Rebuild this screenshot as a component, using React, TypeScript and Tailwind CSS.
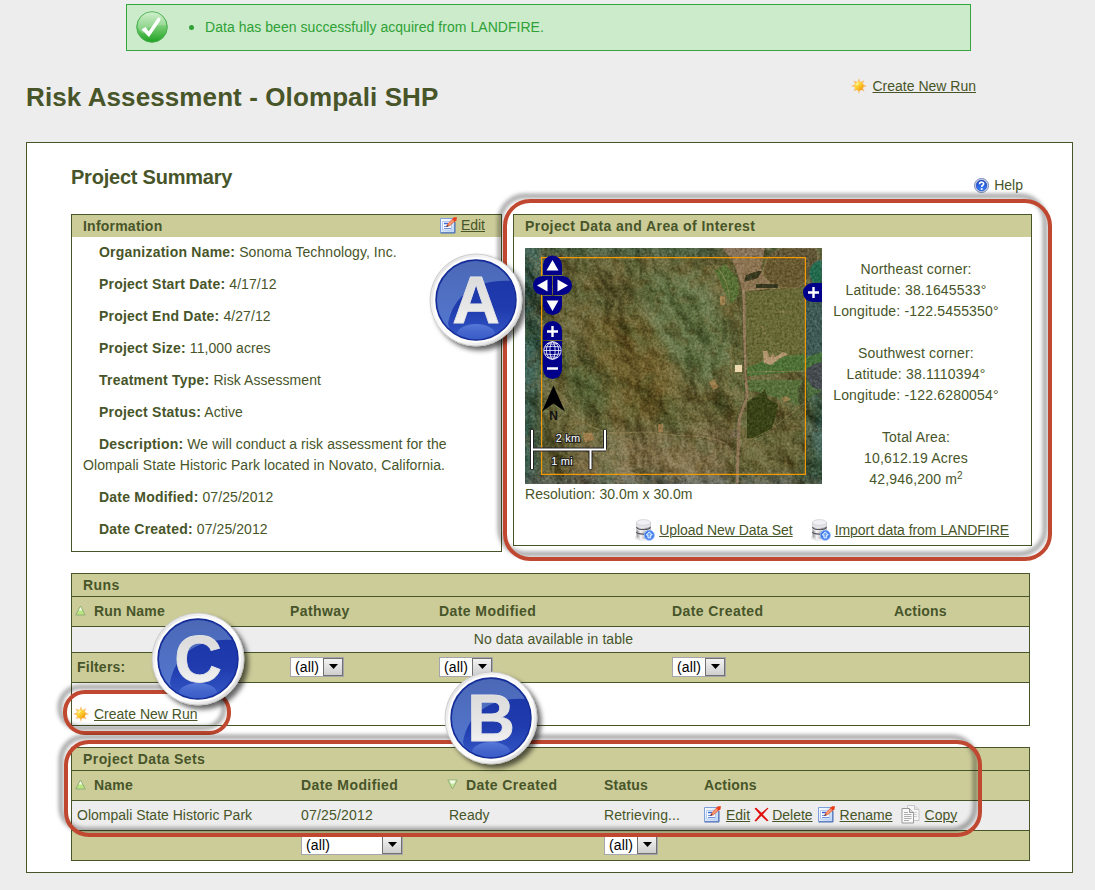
import type { ReactNode } from "react";

function EditIcon() {
  return (
    <svg width="17" height="17" viewBox="0 0 17 17" className="block shrink-0">
      <defs>
        <linearGradient id="editPaper" x1="0" y1="0" x2="1" y2="1">
          <stop offset="0" stopColor="#ffffff" />
          <stop offset="1" stopColor="#b9d3f7" />
        </linearGradient>
      </defs>
      <path d="M.5 1.500h14v14H.5z" fill="url(#editPaper)" stroke="#7d9fdc" />
      <path d="M.5 16h14.500v-11" fill="none" stroke="#4a6bb0" />
      <path d="M2.500 4.500h9v8.500h-9z" fill="#f8fbff" stroke="#b4caee" />
      <path d="M4 6.500h4" stroke="#3f66d8" strokeWidth="1.500" />
      <path d="M4 9.500h3M4 11.500h7" stroke="#6d90dc" />
      <path d="M6.500 9.500l1.300-2.700L13 1.700l2.200 2-5.500 5z" fill="#f47a50" stroke="#d2492a" strokeWidth=".5" />
      <path d="M12 2.200l2-2h3l-.6 3-1.700 1.500z" fill="#ea3c18" />
      <path d="M6.300 10l.8-2 1.500 1.300z" fill="#33335c" />
      <path d="M9 7.500l4.500-4.300" stroke="#ffd0b8" strokeWidth=".8" />
    </svg>
  );
}

function SunIcon() {
  return (
    <svg width="16" height="16" viewBox="0 0 16 16" className="block shrink-0">
      <defs>
        <linearGradient id="sunFill" x1="0" y1="0" x2="1" y2="1">
          <stop offset="0" stopColor="#fff06a" />
          <stop offset=".5" stopColor="#fdcb2b" />
          <stop offset="1" stopColor="#f08a08" />
        </linearGradient>
      </defs>
      <path
        d="M8 0l1.200 4.100L13.300 2.200 11.700 6 16 8l-4.300 1.400 1.900 4.200-4.400-1.800L8 16l-1.500-4.200L2.600 13.300 4.200 9.500 0 8l4.200-1.700L2.400 2.400l4.200 1.700z"
        fill="#f8b45c"
        opacity=".85"
      />
      <circle cx="8" cy="8" r="4.500" fill="url(#sunFill)" />
      <path d="M5.500 7l2-2" stroke="#fff6b4" strokeWidth="1.400" />
    </svg>
  );
}

function HelpIcon() {
  return (
    <svg width="15" height="15" viewBox="0 0 15 15" className="block shrink-0">
      <defs>
        <linearGradient id="helpFill" x1="0" y1="0" x2="0" y2="1">
          <stop offset="0" stopColor="#1740c0" />
          <stop offset="1" stopColor="#3f86ff" />
        </linearGradient>
      </defs>
      <circle cx="7.500" cy="7.500" r="7" fill="#e4ebf9" stroke="#7385b4" />
      <circle cx="7.500" cy="7.500" r="5.400" fill="url(#helpFill)" stroke="#1b3da4" strokeWidth=".6" />
      <path d="M5.500 6.200c0-2.900 4.200-2.600 4.200-.4 0 1.500-2 1.400-2 3.100" fill="none" stroke="#fff" strokeWidth="1.600" />
      <circle cx="7.700" cy="10.900" r="1" fill="#fff" />
    </svg>
  );
}

function DatabaseIcon() {
  return (
    <svg width="20" height="22" viewBox="0 0 20 22" className="block shrink-0">
      <defs>
        <linearGradient id="dbFill" x1="0" x2="1" y1="0" y2="0">
          <stop offset="0" stopColor="#8d8d93" />
          <stop offset=".3" stopColor="#f7f7f9" />
          <stop offset="1" stopColor="#75757c" />
        </linearGradient>
      </defs>
      <path d="M0 16c0 6 18 6 18 0v3c0 3.500-18 3.500-18 0z" fill="#cfcfd2" opacity=".6" />
      <path d="M1.500 3.500v14c0 3.400 14 3.400 14 0v-14z" fill="url(#dbFill)" />
      <path d="M1.500 8.300c0 3 14 3 14 0M1.500 12.800c0 3 14 3 14 0" fill="none" stroke="#55555c" strokeWidth="1.200" />
      <path d="M1.500 9.500c0 3 14 3 14 0" fill="none" stroke="#fff" strokeWidth=".7" />
      <path d="M1.500 3.500v3.300c0 3 14 3 14 0V3.500z" fill="#e3e3e8" />
      <ellipse cx="8.500" cy="3.500" rx="7" ry="2.900" fill="#f1f1f4" stroke="#c4c4ca" strokeWidth=".6" />
      <circle cx="14.300" cy="16.300" r="5" fill="#3f7cec" stroke="#8fb6fb" strokeWidth=".9" />
      <path d="M14.300 12.800l3 3.200h-1.600v2.900h-2.800V16h-1.600z" fill="#6fa4ff" stroke="#fff" strokeWidth=".9" />
    </svg>
  );
}

function CopyIcon() {
  return (
    <svg width="19" height="19" viewBox="0 0 19 19" className="block shrink-0">
      <path d="M6.500.5h7l4.500 4v11H6.500z" fill="#f6f6f6" stroke="#c6c6c6" />
      <path d="M13.500.5v4H18" fill="#e2e2e2" stroke="#c6c6c6" />
      <path d="M12 7.500h4M12 9.500h4M12 11.500h4" stroke="#cfcfcf" />
      <path d="M1 3.500h7.500l4 4v10.500H1z" fill="#f9f9f9" stroke="#999" />
      <path d="M8.500 3.500v4h4" fill="#dadada" stroke="#999" />
      <path d="M3 7.500h4M3 9.500h7.500M3 11.500h7.500M3 13.500h7.500M3 15.500h5" stroke="#adadad" />
    </svg>
  );
}

function DeleteIcon() {
  return (
    <svg width="15" height="15" viewBox="0 0 15 15" className="block shrink-0">
      <path d="M.5 1.500L2.200.8 7.500 5.800 13.500.7l1 .5-5.700 6.200 5.700 6.100-1.500.8-5.700-5.200L2 14.500.5 13.800l5.300-6.300z" fill="#e20d0d" />
    </svg>
  );
}

function SuccessIcon() {
  return (
    <svg width="32" height="34" viewBox="0 0 32 34" className="block shrink-0">
      <defs>
        <linearGradient id="okFill" x1="0" y1="0" x2="0" y2="1">
          <stop offset="0" stopColor="#c4ecc0" />
          <stop offset=".5" stopColor="#74cb70" />
          <stop offset="1" stopColor="#1fa222" />
        </linearGradient>
      </defs>
      <circle cx="16" cy="16" r="15.300" fill="url(#okFill)" stroke="#46ad4a" />
      <path d="M2 15a14 14 0 0 1 28-.5c-9-1-18 0-23 8C4 20 2 18 2 15z" fill="#fff" opacity=".22" />
      <path d="M5.500 18.500l4-2.500 3.200 4.300L22 6.500l2.500.5-.5 3L13 26z" fill="#fff" />
    </svg>
  );
}

function SortIcon({ down = false }: { down?: boolean }) {
  return (
    <svg width="11" height="11" viewBox="0 0 11 11" className="block">
      {down ? (
        <>
          <path d="M.8 1h9.400L5.500 10z" fill="#c3e79a" stroke="#94b07c" strokeLinejoin="round" />
          <path d="M2.500 1.500h6l-1.500 3H4z" fill="#f8fff0" />
        </>
      ) : (
        <>
          <path d="M5.500 1l4.700 9H.8z" fill="#b9e67f" stroke="#8fac78" strokeLinejoin="round" />
          <path d="M5.500 2l1.700 3.500H3.800z" fill="#f6ffea" />
        </>
      )}
    </svg>
  );
}

function Filter({ wide = false }: { wide?: boolean }) {
  return (
    <div
      className={
        (wide ? "w-[102px]" : "w-[54px]") +
        " mb-0.5 flex h-5 items-center justify-between border border-[#a5a5ab] bg-white pl-1 text-sm text-black"
      }
    >
      <span className="tracking-[0.15px]">(all)</span>
      <span className="flex h-[18px] w-5 items-center justify-center border border-[#707070] bg-linear-to-b from-[#f3f3f3] to-[#cfcfcf]">
        <svg width="9" height="5" viewBox="0 0 9 5">
          <path d="M0 0h9L4.500 5z" fill="#000" />
        </svg>
      </span>
    </div>
  );
}

function Bold({ children, wide = false }: { children: ReactNode; wide?: boolean }) {
  return <b className={wide ? "tracking-[0.42px]" : "tracking-[0.22px]"}>{children}</b>;
}

function Link({ children }: { children: ReactNode }) {
  return (
    <a href="#" className="underline decoration-1 underline-offset-1">
      {children}
    </a>
  );
}

function Terrain() {
  return (
    <g className="isolate">
      <rect width="297" height="236" fill="#62643f" />
      <g filter="url(#soften)">
        <path d="M-10-10h28l-6 60 8 50-10 60 4 50-4 40h-30z" fill="#31594e" />
        <path d="M20-8h170v14H20z" fill="#466347" />
        <path d="M120 20l60 10 34 80-34 30-54-50z" fill="#5c734e" />
        <path d="M60 70l60 0 30 50 0 50-60 0z" fill="#675e30" />
        <path d="M55 192l150-15 5 60H40z" fill="#7b7354" />
        <path d="M0 230h300v20H0z" fill="#636b64" />
        <path d="M285 110h30v130h-34l4-50z" fill="#3d6057" />
        <path d="M35 115l36 0 10 30-26 25z" fill="#53683f" />
      </g>
      <rect width="297" height="236" filter="url(#patches)" opacity=".45" />
      <rect width="297" height="236" filter="url(#scrub)" opacity=".25" />
      <g className="mix-blend-soft-light">
        <rect width="297" height="236" filter="url(#relief)" opacity=".75" />
      </g>
      <path d="M221 44l76-6v76l-72 14-4-40z" fill="#5f673b" />
      <path d="M218 132h78v11l-22 14-45-14h-11z" fill="#4e6e40" />
      <path d="M246 110l51-6v18l-75 6 0-8z" fill="#44703b" />
      <path d="M190 22l10-6 12 14 2 16-8 10-8-16z" fill="#4e7039" />
      <path d="M198 0h42l-4 20 12 20-30 4-8-26z" fill="#877359" />
      <path d="M238 23C240 8 252 0 258 0h32c8 12-4 32-18 40l-14 0c-12-4-20-9-20-17z" fill="#605636" stroke="#80754f" />
      <path d="M284 26c0-8 6-14 13-14v24h-9z" fill="#236b4e" stroke="#4e5a4c" />
      <path d="M281 44l16-6v66l-16 5z" fill="#3f5a54" />
      <path d="M281 122c5-5 10-7 16-8v27c-9 2-15-6-16-19z" fill="#454b4e" />
      <path d="M274 140l7-14 2 38-10-10z" fill="#3c4a30" />
      <path d="M222 154l14-9 4-4 3 10 10 5-2 12-5 14-14 8-10 0z" fill="#2c3d18" />
      <path d="M237 23l-4 7-14 4 2-7 12-4zM231 36h22v4h-22z" fill="#2a3120" />
      <path
        d="M183 12c10 8 18 12 22 40M220 42l40-2M222 124l60-1M231 78l8 1M236 78l14 24 10 4M252 64h15M207 125l-1-20M225 192l20-10 36-28M40 150c30 50 60 30 90 35s50 0 70 10"
        stroke="#9c8c66"
        fill="none"
        opacity=".55"
      />
      <path d="M209 8c5 18 11 26 10 50l1 70 2 12c1 14-6 18-8 34l-2 62" stroke="#8e7961" fill="none" strokeWidth="3" />
      <path d="M206 8c5 20 13 30 11 60l2 60 1 22-9 24-2 62" stroke="#4f5538" fill="none" />
      <path d="M210 117h7v7h-7z" fill="#efe0bf" />
      <path d="M238 103l4 0 3 7 3-5 2 4 8-5 5 2-9 5-8 6-7-2z" fill="#b39a7c" />
      <path
        d="M58 185l9 0 2 7-9 2zM49 190h5v4h-5zM184 134l5-3 5 8-6 3zM195 48h5v9h-5zM133 176h5v8h-5zM256 150l6-2 4 4-7 2z"
        fill="#b58a5c"
        opacity=".65"
      />
      <path d="M205 182h10v8h-10z" fill="#71665a" opacity=".6" />
      <g className="mix-blend-soft-light">
        <rect width="297" height="236" filter="url(#grain)" opacity=".5" />
      </g>
    </g>
  );
}

function AreaMap() {
  return (
    <svg width="297" height="236" viewBox="0 0 297 236" className="block">
      <defs>
        <filter id="relief" x="0" y="0" width="100%" height="100%" colorInterpolationFilters="sRGB">
          <feTurbulence type="fractalNoise" baseFrequency=".022 .018" numOctaves="4" seed="12" />
          <feColorMatrix values="0 0 0 0 0 0 0 0 0 0 0 0 0 0 0 1 0 0 0 0" />
          <feDiffuseLighting surfaceScale="14" diffuseConstant=".7" lightingColor="#ffffff">
            <feDistantLight azimuth="320" elevation="45" />
          </feDiffuseLighting>
        </filter>
        <filter id="grain" x="0" y="0" width="100%" height="100%" colorInterpolationFilters="sRGB">
          <feTurbulence type="fractalNoise" baseFrequency=".4" numOctaves="3" seed="4" />
          <feColorMatrix values="1.200 .4 0 0 -.3 1.200 .4 0 0 -.3 1.200 .4 0 0 -.3 0 0 0 0 1" />
        </filter>
        <filter id="patches" x="0" y="0" width="100%" height="100%" colorInterpolationFilters="sRGB">
          <feTurbulence type="fractalNoise" baseFrequency=".03" numOctaves="5" seed="31" />
          <feColorMatrix values="0 0 0 0 .25 0 0 0 0 .35 0 0 0 0 .2 4 0 0 0 -1.900" />
        </filter>
        <filter id="scrub" x="0" y="0" width="100%" height="100%" colorInterpolationFilters="sRGB">
          <feTurbulence type="fractalNoise" baseFrequency=".07" numOctaves="4" seed="8" />
          <feColorMatrix values="0 0 0 0 .38 0 0 0 0 .29 0 0 0 0 .13 0 5 0 0 -2.500" />
        </filter>
        <filter id="soften" x="-20%" y="-20%" width="140%" height="140%">
          <feGaussianBlur stdDeviation="7" />
        </filter>
      </defs>
      <Terrain />
      <path d="M16 9h265v218H16z" fill="#d08000" fillOpacity=".08" />
      <path d="M16 9h265v218H16zM17.200 10.200v215.600h262.600V10.200z" fill="#f29a05" fillRule="evenodd" />

      <g fill="#00008b">
        <path d="M18 27V17a9.500 9.500 0 0 1 19 0v10z" />
        <path d="M27 28v19H17.500a9.500 9.500 0 0 1 0-19z" />
        <path d="M28 28h9.500a9.500 9.500 0 0 1 0 19H28z" />
        <path d="M18 48h19v9.500a9.500 9.500 0 0 1-19 0z" />
        <path d="M18 92v-9.500a9.500 9.500 0 0 1 19 0V92z" />
        <path d="M18 93h19v28.500a9.500 9.500 0 0 1-19 0z" />
        <path d="M297 35v19h-9.500a9.500 9.500 0 0 1 0-19z" />
      </g>
      <path d="M27.500 12l6 10.500h-12zM27.500 63l-6-10.500h12zM12 37.500l10.500-6v12zM43 37.500l-10.500-6v12z" fill="#fff" />
      <path d="M22 83.500h11M27.500 78v11M22 120.500h11M283 44.500h11M288.500 39v11" stroke="#fff" strokeWidth="2.400" />
      <g fill="none" stroke="#fff" strokeWidth=".8">
        <circle cx="27.500" cy="102.500" r="8.700" />
        <ellipse cx="27.500" cy="102.500" rx="2.600" ry="8.700" />
        <ellipse cx="27.500" cy="102.500" rx="6.200" ry="8.700" />
        <path d="M19 102.500h17M20 99q7.500-1.400 15 0M20 106q7.500 1.400 15 0M22 95.500q5.500 1.500 11 0M22 109.500q5.500-1.500 11 0" />
      </g>
      <path d="M28.500 137.500L40 163.500l-11.500-8-11.500 8z" fill="#000" />
      <text x="28.500" y="171.500" textAnchor="middle" className="font-['Liberation_Sans',sans-serif] text-xs font-bold" fill="#111">
        N
      </text>
      <path d="M7 181.500v40M7 201.500h74M80 181.500v20M65.500 201.500v20" stroke="#222" strokeWidth="4" fill="none" />
      <path d="M7 182v39M6 201.500h75M80 182v20M65.500 201v20" stroke="#fff" strokeWidth="2" fill="none" />
      <g
        textAnchor="middle"
        className="font-['Liberation_Sans',sans-serif] text-[11px] tracking-[0.2px]"
        fill="#fff"
        stroke="#222"
        strokeWidth="2"
        paintOrder="stroke"
      >
        <text x="43" y="194">2 km</text>
        <text x="37" y="217">1 mi</text>
      </g>
    </svg>
  );
}

function Badge({ letter, place }: { letter: string; place: string }) {
  const id = "badge" + letter;
  return (
    <svg width="108" height="108" viewBox="-50 -50 108 108" className={"absolute " + place}>
      <defs>
        <linearGradient id={id + "Rim"} x1="0" y1="0" x2="1" y2="1">
          <stop offset="0" stopColor="#d8d8d8" />
          <stop offset=".3" stopColor="#f2f2f2" />
          <stop offset=".6" stopColor="#ffffff" />
          <stop offset="1" stopColor="#c9c9c9" />
        </linearGradient>
        <linearGradient id={id + "Blue"} x1="0" y1="0" x2="0" y2="1">
          <stop offset="0" stopColor="#1a34a4" />
          <stop offset=".6" stopColor="#1f3bae" />
          <stop offset="1" stopColor="#3558c6" />
        </linearGradient>
        <linearGradient id={id + "Gloss"} x1="0" y1="0" x2="0" y2="1">
          <stop offset="0" stopColor="#4b67b4" />
          <stop offset="1" stopColor="#5479d3" />
        </linearGradient>
        <linearGradient id={id + "Glow"} x1="0" y1="0" x2="0" y2="1">
          <stop offset="0" stopColor="#6d8fe6" stopOpacity=".7" />
          <stop offset="1" stopColor="#4667cc" stopOpacity=".1" />
        </linearGradient>
        <linearGradient id={id + "Text"} x1="0" y1="0" x2="0" y2="1">
          <stop offset="0" stopColor="#d6d6d6" />
          <stop offset=".6" stopColor="#e7e7e7" />
          <stop offset="1" stopColor="#fafafa" />
        </linearGradient>
        <clipPath id={id + "Clip"}>
          <circle r="39" />
        </clipPath>
        <filter id={id + "Shadow"} x="-20%" y="-20%" width="150%" height="150%">
          <feDropShadow dx="4" dy="4" stdDeviation="2.500" floodColor="#000" floodOpacity=".6" />
        </filter>
      </defs>
      <circle r="46" fill={"url(#" + id + "Rim)"} stroke="#c4c4c4" strokeWidth=".8" filter={"url(#" + id + "Shadow)"} />
      <circle r="42" fill="none" stroke="#fdfdfd" strokeWidth="2" />
      <circle r="40" fill={"url(#" + id + "Blue)"} stroke="#122b96" strokeWidth="1.400" />
      <g clipPath={"url(#" + id + "Clip)"}>
        <path d="M-45-45h90v27C8-24-22-10-28 24-26 32-24 34-20 40h-25z" fill={"url(#" + id + "Gloss)"} />
        <ellipse cx="0" cy="34" rx="19" ry="10" fill={"url(#" + id + "Glow)"} />
      </g>
      <text
        y="23"
        textAnchor="middle"
        className="font-['Liberation_Sans',sans-serif] text-[66px] font-bold"
        fill={"url(#" + id + "Text)"}
        stroke="#e4e4e4"
        strokeWidth=".8"
      >
        {letter}
      </text>
    </svg>
  );
}

function Callout({ place }: { place: string }) {
  return (
    <div
      className={
        "pointer-events-none absolute border-4 border-[#c04830] drop-shadow-[-5px_-5px_2px_rgba(0,0,0,0.42)] " + place
      }
    />
  );
}

const details: [string, string][] = [
  ["Organization Name:", "Sonoma Technology, Inc."],
  ["Project Start Date:", "4/17/12"],
  ["Project End Date:", "4/27/12"],
  ["Project Size:", "11,000 acres"],
  ["Treatment Type:", "Risk Assessment"],
  ["Project Status:", "Active"],
  ["Description:", "We will conduct a risk assessment for the Olompali State Historic Park located in Novato, California."],
  ["Date Modified:", "07/25/2012"],
  ["Date Created:", "07/25/2012"],
];

const runsGrid = "grid grid-cols-[218px_149px_233px_222px_1fr] items-center";
const setsGrid = "grid grid-cols-[229px_148px_155px_100px_1fr] items-center";

export default function App() {
  return (
    <div className="relative h-[890px] w-[1095px] overflow-hidden bg-[#ededed] pt-1 font-['Liberation_Sans',Arial,sans-serif] text-sm text-[#475529]">
      <div className="ml-[126px] flex h-[47px] w-[845px] items-center border border-[#35a63b] bg-[#cbebca] pl-[9px] text-[#2fa136]">
        <SuccessIcon />
        <span className="ml-[21px] mr-[11px] size-[5px] rounded-full bg-[#2fa136]" />
        <span className="pb-0.5 tracking-[0.04px]">Data has been successfully acquired from LANDFIRE.</span>
      </div>

      <header className="flex h-[91px] justify-between pl-[26px] pr-[119px]">
        <h1 className="pt-[30px] text-[26px] leading-8 font-bold tracking-[0.1px]">Risk Assessment - Olompali SHP</h1>
        <div className="mt-[25px] flex h-5 items-center gap-[6px]">
          <SunIcon />
          <Link>Create New Run</Link>
        </div>
      </header>

      <main className="ml-[26px] h-[731px] w-[1047px] border border-[#475529] bg-white pl-11">
        <div className="flex h-[71px] justify-between pr-[49px]">
          <h2 className="pt-5 text-[20px] leading-7 font-bold tracking-[-0.22px]">Project Summary</h2>
          <div className="mt-8 flex h-5 items-center gap-[5px]">
            <HelpIcon />
            <span>Help</span>
          </div>
        </div>

        <div className="flex items-start gap-[11px]">
          <section className="h-[338px] w-[431px] border border-[#475529]">
            <div className="flex h-[22px] items-center justify-between bg-[#cccc99] pl-[11px] pr-4">
              <Bold>Information</Bold>
              <span className="flex items-center gap-1 pb-0.5">
                <EditIcon />
                <Link>Edit</Link>
              </span>
            </div>
            <div className="flex flex-col gap-[11px] pl-[11px] pr-8 pt-[5px]">
              {details.map(([label, value]) => (
                <p key={label} className="indent-4 leading-[21px] tracking-[0.07px]">
                  <Bold>{label}</Bold> {value}
                </p>
              ))}
            </div>
          </section>

          <section className="h-[332px] w-[519px] border border-[#475529]">
            <div className="flex h-[22px] items-center bg-[#cccc99] pl-[11px]">
              <Bold wide>Project Data and Area of Interest</Bold>
            </div>
            <div className="flex pl-[11px] pt-[11px]">
              <div>
                <AreaMap />
                <p className="leading-[21px] tracking-[0.04px]">Resolution: 30.0m x 30.0m</p>
              </div>
              <div className="w-[188px] pt-[11px] text-center leading-[21px] tracking-[0.18px]">
                <p>Northeast corner:</p>
                <p>Latitude: 38.1645533°</p>
                <p>Longitude: -122.5455350°</p>
                <p className="mt-[21px]">Southwest corner:</p>
                <p>Latitude: 38.1110394°</p>
                <p>Longitude: -122.6280054°</p>
                <p className="mt-[21px]">Total Area:</p>
                <p>10,612.19 Acres</p>
                <p>
                  42,946,200 m<sup className="text-[10px]">2</sup>
                </p>
              </div>
            </div>
            <div className="mt-[14px] flex items-center justify-end pr-[22px] tracking-[-0.06px]">
              <DatabaseIcon />
              <span className="ml-1 mr-[18px]">
                <Link>Upload New Data Set</Link>
              </span>
              <DatabaseIcon />
              <span className="ml-1">
                <Link>Import data from LANDFIRE</Link>
              </span>
            </div>
          </section>
        </div>

        <section className="mt-[21px] h-[153px] w-[959px] border border-[#475529]">
          <div className="flex h-[23px] items-center border-b border-[#475529] bg-[#cccc99] pl-[11px]">
            <Bold wide>Runs</Bold>
          </div>
          <div className={runsGrid + " h-[30px] border-b border-[#475529] bg-[#cccc99] pb-0.5"}>
            <span className="flex items-center gap-[7px] pl-[3px]">
              <SortIcon />
              <span className="pl-px">
                <Bold>Run Name</Bold>
              </span>
            </span>
            <Bold wide>Pathway</Bold>
            <Bold wide>Date Modified</Bold>
            <Bold wide>Date Created</Bold>
            <Bold>Actions</Bold>
          </div>
          <div className="flex h-[26px] items-center justify-center border-b border-[#475529] bg-[#ededed] pb-0.5 pl-1.5 tracking-[0.08px]">
            No data available in table
          </div>
          <div className={runsGrid + " h-[30px] border-b border-[#475529] bg-[#cccc99]"}>
            <span className="pb-0.5 pl-[5px]">
              <Bold>Filters:</Bold>
            </span>
            <Filter />
            <Filter />
            <Filter />
          </div>
          <div className="mt-[21px] flex h-5 items-center gap-[5px] pl-px">
            <SunIcon />
            <Link>Create New Run</Link>
          </div>
        </section>

        <section className="mt-[21px] h-[114px] w-[959px] border border-[#475529]">
          <div className="flex h-[23px] items-center border-b border-[#475529] bg-[#cccc99] pl-[11px]">
            <Bold wide>Project Data Sets</Bold>
          </div>
          <div className={setsGrid + " h-[30px] border-b border-[#475529] bg-[#cccc99] pb-0.5"}>
            <span className="flex items-center gap-[7px] pl-[3px]">
              <SortIcon />
              <span className="pl-px">
                <Bold>Name</Bold>
              </span>
            </span>
            <Bold wide>Date Modified</Bold>
            <span className="-ml-[2px] flex items-center gap-2">
              <SortIcon down />
              <Bold wide>Date Created</Bold>
            </span>
            <Bold>Status</Bold>
            <Bold>Actions</Bold>
          </div>
          <div className={setsGrid + " h-[30px] border-b border-[#475529] bg-[#ededed] pb-0.5"}>
            <span className="pl-[5px]">Olompali State Historic Park</span>
            <span className="tracking-[0.2px]">07/25/2012</span>
            <span>Ready</span>
            <span className="tracking-[0.1px]">Retrieving...</span>
            <span className="flex items-center">
              <EditIcon />
              <span className="ml-[5px] mr-1">
                <Link>Edit</Link>
              </span>
              <DeleteIcon />
              <span className="ml-[3px] mr-[5px]">
                <Link>Delete</Link>
              </span>
              <EditIcon />
              <span className="ml-[5px] mr-2">
                <Link>Rename</Link>
              </span>
              <CopyIcon />
              <span className="ml-[5px]">
                <Link>Copy</Link>
              </span>
            </span>
          </div>
          <div className={setsGrid + " h-[29px] bg-[#cccc99]"}>
            <span />
            <Filter wide />
            <span />
            <Filter />
          </div>
        </section>
      </main>

      <Callout place="left-[503px] top-[199px] h-[362px] w-[549px] rounded-[27px]" />
      <Callout place="left-[63px] top-[690px] h-[45px] w-[168px] rounded-[22px]" />
      <Callout place="left-[64px] top-[740px] h-[97px] w-[918px] rounded-[25px]" />
      <Badge letter="A" place="left-[426px] top-[250px]" />
      <Badge letter="C" place="left-[148px] top-[609px]" />
      <Badge letter="B" place="left-[441px] top-[668px]" />
    </div>
  );
}
